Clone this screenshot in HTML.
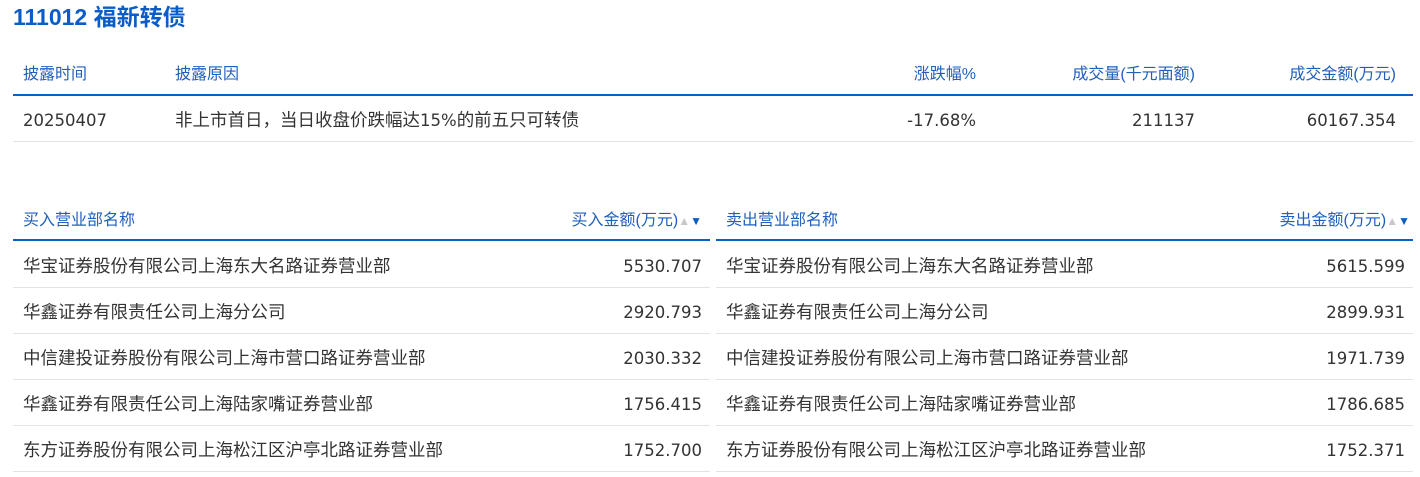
<!DOCTYPE html>
<html><head><meta charset="utf-8"><style>
body{margin:0;background:#fff;font-family:"DejaVu Sans","Noto Sans CJK SC",sans-serif;color:#333;width:1420px;height:477px;overflow:hidden;position:relative}
.t{position:absolute;left:13px;top:2px;font-size:23px;font-weight:bold;color:#0b5cc8;line-height:30px;font-family:"Liberation Sans","Noto Sans CJK SC",sans-serif}
.a{position:absolute;white-space:nowrap;line-height:20px}
.h{color:#1f5fbf;font-size:16px;font-family:"Liberation Sans","Noto Sans CJK SC",sans-serif}
.b{font-size:17.5px;color:#333}
.n{font-size:16.5px}
.line{position:absolute;height:2px;background:#0a5ec8}
.bl{position:absolute;height:1px;background:#e3e3e3}
.r{text-align:right}
.s{font-size:12px}
.s .u{color:#c8c8c8}.s .d{color:#0a5ec8}
</style></head><body>
<div class="t">111012 福新转债</div>
<div class="a h" style="left:23px;top:65px">披露时间</div>
<div class="a h" style="left:175px;top:65px">披露原因</div>
<div class="a h r" style="right:444px;top:65px">涨跌幅%</div>
<div class="a h r" style="right:225px;top:65px">成交量(千元面额)</div>
<div class="a h r" style="right:24px;top:65px">成交金额(万元)</div>
<div class="line" style="left:13px;width:1400px;top:94px"></div>
<div class="a b n" style="left:23px;top:111px">20250407</div>
<div class="a b" style="left:175px;top:111px">非上市首日，当日收盘价跌幅达<span class="n">15%</span>的前五只可转债</div>
<div class="a b n r" style="right:444px;top:111px">-17.68%</div>
<div class="a b n r" style="right:225px;top:111px">211137</div>
<div class="a b n r" style="right:24px;top:111px">60167.354</div>
<div class="bl" style="left:13px;width:1400px;top:141px"></div>

<div class="a h" style="left:23px;top:211px">买入营业部名称</div>
<div class="a h" style="right:718px;top:211px">买入金额(万元)<span class="s"><span class="u">▲</span><span class="d">▼</span></span></div>
<div class="a h" style="left:726px;top:211px">卖出营业部名称</div>
<div class="a h" style="right:10px;top:211px">卖出金额(万元)<span class="s"><span class="u">▲</span><span class="d">▼</span></span></div>
<div class="line" style="left:13px;width:697px;top:239px"></div>
<div class="line" style="left:716px;width:697px;top:239px"></div>

<div id="rows"></div>
<script>
var L=[["华宝证券股份有限公司上海东大名路证券营业部","5530.707","华宝证券股份有限公司上海东大名路证券营业部","5615.599"],
["华鑫证券有限责任公司上海分公司","2920.793","华鑫证券有限责任公司上海分公司","2899.931"],
["中信建投证券股份有限公司上海市营口路证券营业部","2030.332","中信建投证券股份有限公司上海市营口路证券营业部","1971.739"],
["华鑫证券有限责任公司上海陆家嘴证券营业部","1756.415","华鑫证券有限责任公司上海陆家嘴证券营业部","1786.685"],
["东方证券股份有限公司上海松江区沪亭北路证券营业部","1752.700","东方证券股份有限公司上海松江区沪亭北路证券营业部","1752.371"]];
var h="";L.forEach(function(r,i){var y=257+46*i;
h+='<div class="a b" style="left:23px;top:'+y+'px">'+r[0]+'</div><div class="a b n r" style="right:718px;top:'+y+'px">'+r[1]+'</div><div class="a b" style="left:726px;top:'+y+'px">'+r[2]+'</div><div class="a b n r" style="right:15px;top:'+y+'px">'+r[3]+'</div>';
h+='<div class="bl" style="left:13px;width:697px;top:'+(y+30)+'px"></div><div class="bl" style="left:716px;width:697px;top:'+(y+30)+'px"></div>';});
document.getElementById("rows").innerHTML=h;
</script>
</body></html>
